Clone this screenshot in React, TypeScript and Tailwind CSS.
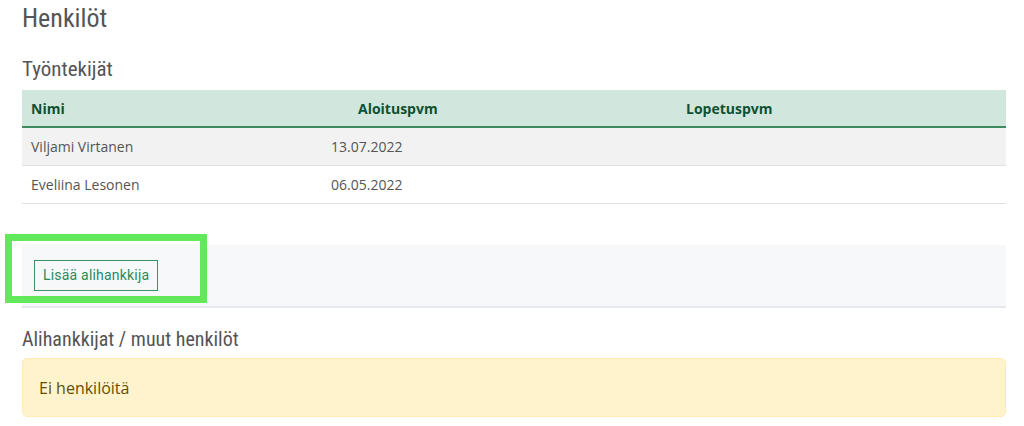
import React from 'react'

const EMPLOYEES = [
  { name: 'Viljami Virtanen', start: '13.07.2022', end: '' },
  { name: 'Eveliina Lesonen', start: '06.05.2022', end: '' },
]

const heading = { fontFamily: '"Roboto Condensed", Roboto, sans-serif' }
const body = { fontFamily: '"Open Sans", sans-serif' }

export default function App() {
  return (
    <div className="relative w-[1024px] h-[426px] bg-white overflow-hidden">
      <div className="pl-[22px] pr-[18px]">
        <h1 style={heading} className="pt-[2px] text-[26px] leading-[32px] text-[#555] font-stretch-condensed">
          Henkilöt
        </h1>

        <h2 style={heading} className="mt-[22px] text-[21px] leading-[26px] text-[#555] font-stretch-condensed">
          Työntekijät
        </h2>

        {/* Employees table */}
        <div style={body} className="mt-[8px] text-[14px]">
          <div className="grid grid-cols-[300px_328px_1fr] h-[38px] items-center bg-[#d1e7dd] border-b-2 border-[#3d8b63] font-bold text-[#0f5132]">
            <div className="pl-[9px]">Nimi</div>
            <div className="pl-[36px]">Aloituspvm</div>
            <div className="pl-[36px]">Lopetuspvm</div>
          </div>
          {EMPLOYEES.map((e, i) => (
            <div
              key={e.name}
              className={`grid grid-cols-[300px_328px_1fr] h-[38px] items-center border-b border-[#dee2e6] text-[#555] ${
                i % 2 === 0 ? 'bg-[#f2f2f2]' : 'bg-white'
              }`}
            >
              <div className="pl-[9px]">{e.name}</div>
              <div className="pl-[9px]">{e.start}</div>
              <div className="pl-[9px]">{e.end}</div>
            </div>
          ))}
        </div>

        {/* Actions panel */}
        <div className="mt-[41px] h-[63px] bg-[#f7f8fa] border-b-2 border-[#e6e8ec] flex items-center pl-[12px]">
          <button
            type="button"
            style={{ fontFamily: 'Roboto, sans-serif' }}
            className="h-[31px] px-[8px] border border-[#3a9268] text-[#2b8a5a] text-[14px] tracking-[0.2px] bg-transparent"
          >
            Lisää alihankkija
          </button>
        </div>

        <h2 style={heading} className="mt-[18px] text-[20px] leading-[26px] text-[#555] font-stretch-condensed">
          Alihankkijat / muut henkilöt
        </h2>

        <div
          style={body}
          className="mt-[6px] h-[59px] flex items-center px-[16px] bg-[#fff3cd] border border-[#ffecb5] rounded-[5px] text-[16px] text-[#664d03]"
        >
          Ei henkilöitä
        </div>
      </div>

      {/* Highlight annotation */}
      <div className="absolute left-[5px] top-[234px] w-[202px] h-[69px] border-[7px] border-[#62e85b]" />
    </div>
  )
}
